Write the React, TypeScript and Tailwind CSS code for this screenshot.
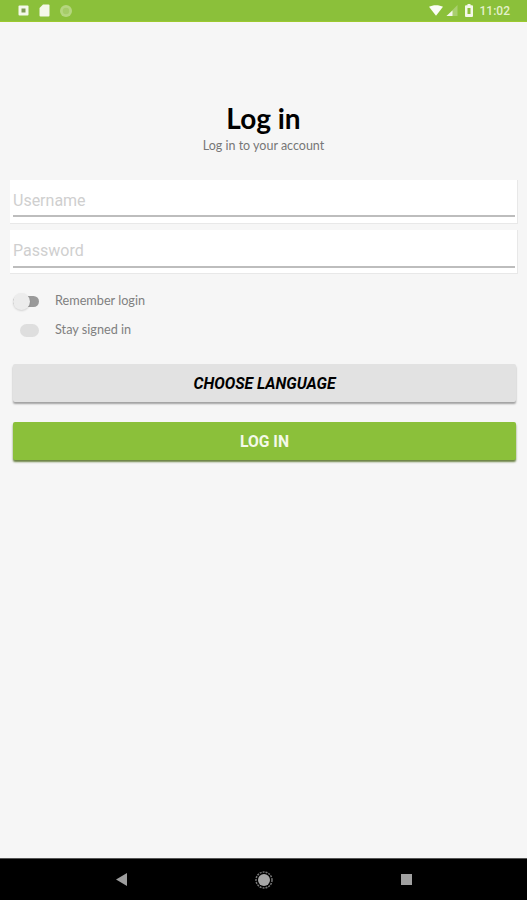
export default function App() {
  return (
    <div className="flex h-[900px] flex-col bg-[#f6f6f6] font-['Roboto',sans-serif]">
      {/* Status bar */}
      <div className="flex h-[22px] items-center justify-between border-b border-[#9cc92f] bg-[#8bc03a] pl-[18px] pr-[17px]">
        <div className="flex items-center gap-[10px]">
          <svg width="11" height="11" viewBox="0 0 11 11">
            <rect x="0.5" y="0.5" width="10" height="10" rx="1" fill="#f4f8ea" />
            <rect x="3.5" y="3.5" width="4" height="4" fill="#7f9a55" />
          </svg>
          <svg width="11" height="13" viewBox="0 0 11 13">
            <path d="M4 0.5h5.5a1 1 0 0 1 1 1v10a1 1 0 0 1-1 1h-8a1 1 0 0 1-1-1V4z" fill="#f4f8ea" />
          </svg>
          <svg width="12" height="12" viewBox="0 0 13 13">
            <circle cx="6.5" cy="6.5" r="6.5" fill="#b5d67f" />
            <circle cx="6.5" cy="6.5" r="3.5" fill="#a5cc68" />
          </svg>
        </div>
        <div className="flex items-center">
          <svg width="14" height="11" viewBox="0 0 16 12">
            <path d="M0 1.8C2 .6 5 0 8 0s6 .6 8 1.8L8 12z" fill="#fbfdf6" />
          </svg>
          <svg width="12" height="11" viewBox="0 0 11 11" className="ml-[3px]">
            <path d="M11 0v11H0z" fill="#a9cf6f" />
            <path d="M6 5.5V11H0z" fill="#f4f8ea" />
          </svg>
          <svg width="8" height="13" viewBox="0 0 8 13" className="ml-[7px]">
            <path d="M2.5 0h3v1.2H7a1 1 0 0 1 1 1V12a1 1 0 0 1-1 1H1a1 1 0 0 1-1-1V2.200a1 1 0 0 1 1-1h1.500z" fill="#f4f8ea" />
            <rect x="2.500" y="4" width="3" height="6" fill="#8bc03a" />
          </svg>
          <span className="ml-[7px] text-[12px] leading-none font-medium text-[#e4f0ca]">11:02</span>
        </div>
      </div>

      {/* Login form */}
      <div className="flex-1">
        <div className="mt-[80px] text-center font-['Lato',sans-serif]">
          <h1 className="text-[28px] leading-[32px] font-bold text-black">Log in</h1>
          <p className="mt-[4px] text-[12.5px] leading-[16px] text-[#777777]">Log in to your account</p>
        </div>

        <div className="mt-[26px] flex flex-col gap-[6px] pl-[10px] pr-[9px]">
          <div className="h-[44px] border-r border-b border-[#e8e8e8] bg-white pl-[3px] pr-[2px] pt-[11px]">
            <div className="h-[26px] border-b-2 border-[#bdbdbd] text-[16px] leading-[20px] text-[#cfcfcf]">Username</div>
          </div>
          <div className="h-[44px] border-r border-b border-[#e8e8e8] bg-white pl-[3px] pr-[2px] pt-[11px]">
            <div className="h-[27px] border-b-2 border-[#bdbdbd] text-[16px] leading-[20px] text-[#cfcfcf]">Password</div>
          </div>
        </div>

        <div className="mt-[18px] flex flex-col gap-[11px] pl-[13px] font-['Lato',sans-serif] text-[12.7px] text-[#808080]">
          <div className="flex h-[18px] items-center">
            <div className="relative h-[11px] w-[26px] rounded-full bg-[#9a9a9a]">
              <div className="absolute top-[-3px] left-0 h-[17px] w-[17px] rounded-full bg-[#ececec] shadow-[0_1px_2px_rgba(0,0,0,0.15)]" />
            </div>
            <span className="ml-[16px]">Remember login</span>
          </div>
          <div className="flex h-[18px] items-center">
            <div className="ml-[7px] h-[13px] w-[19px] rounded-full bg-[#dedede]" />
            <span className="ml-[16px]">Stay signed in</span>
          </div>
        </div>

        <div className="mt-[25px] flex flex-col gap-[20px] pl-[13px] pr-[11px] text-[15.7px] font-bold">
          <button className="h-[38px] rounded-[2px] bg-[#e2e2e2] pt-[1px] text-black italic shadow-[0_2px_2px_rgba(0,0,0,0.35)]">
            CHOOSE LANGUAGE
          </button>
          <button className="h-[38px] rounded-[2px] bg-[#8bc03a] pt-[1px] text-[#f4f9e9] shadow-[0_2px_2px_rgba(70,100,20,0.8)]">
            LOG IN
          </button>
        </div>
      </div>

      {/* Navigation bar */}
      <div className="flex h-[42px] items-center justify-center gap-[128px] border-t border-[#555555] bg-black">
        <svg width="11" height="13" viewBox="0 0 11 13">
          <path d="M11 0v13L0 6.500z" fill="#9e9e9e" />
        </svg>
        <svg width="18" height="18" viewBox="0 0 18 18">
          <circle cx="9" cy="9" r="8" fill="none" stroke="#777777" strokeWidth="1.500" strokeDasharray="2 1" />
          <circle cx="9" cy="9" r="6" fill="#a8a8a8" />
        </svg>
        <div className="h-[11px] w-[11px] bg-[#a0a0a0]" />
      </div>
    </div>
  );
}
